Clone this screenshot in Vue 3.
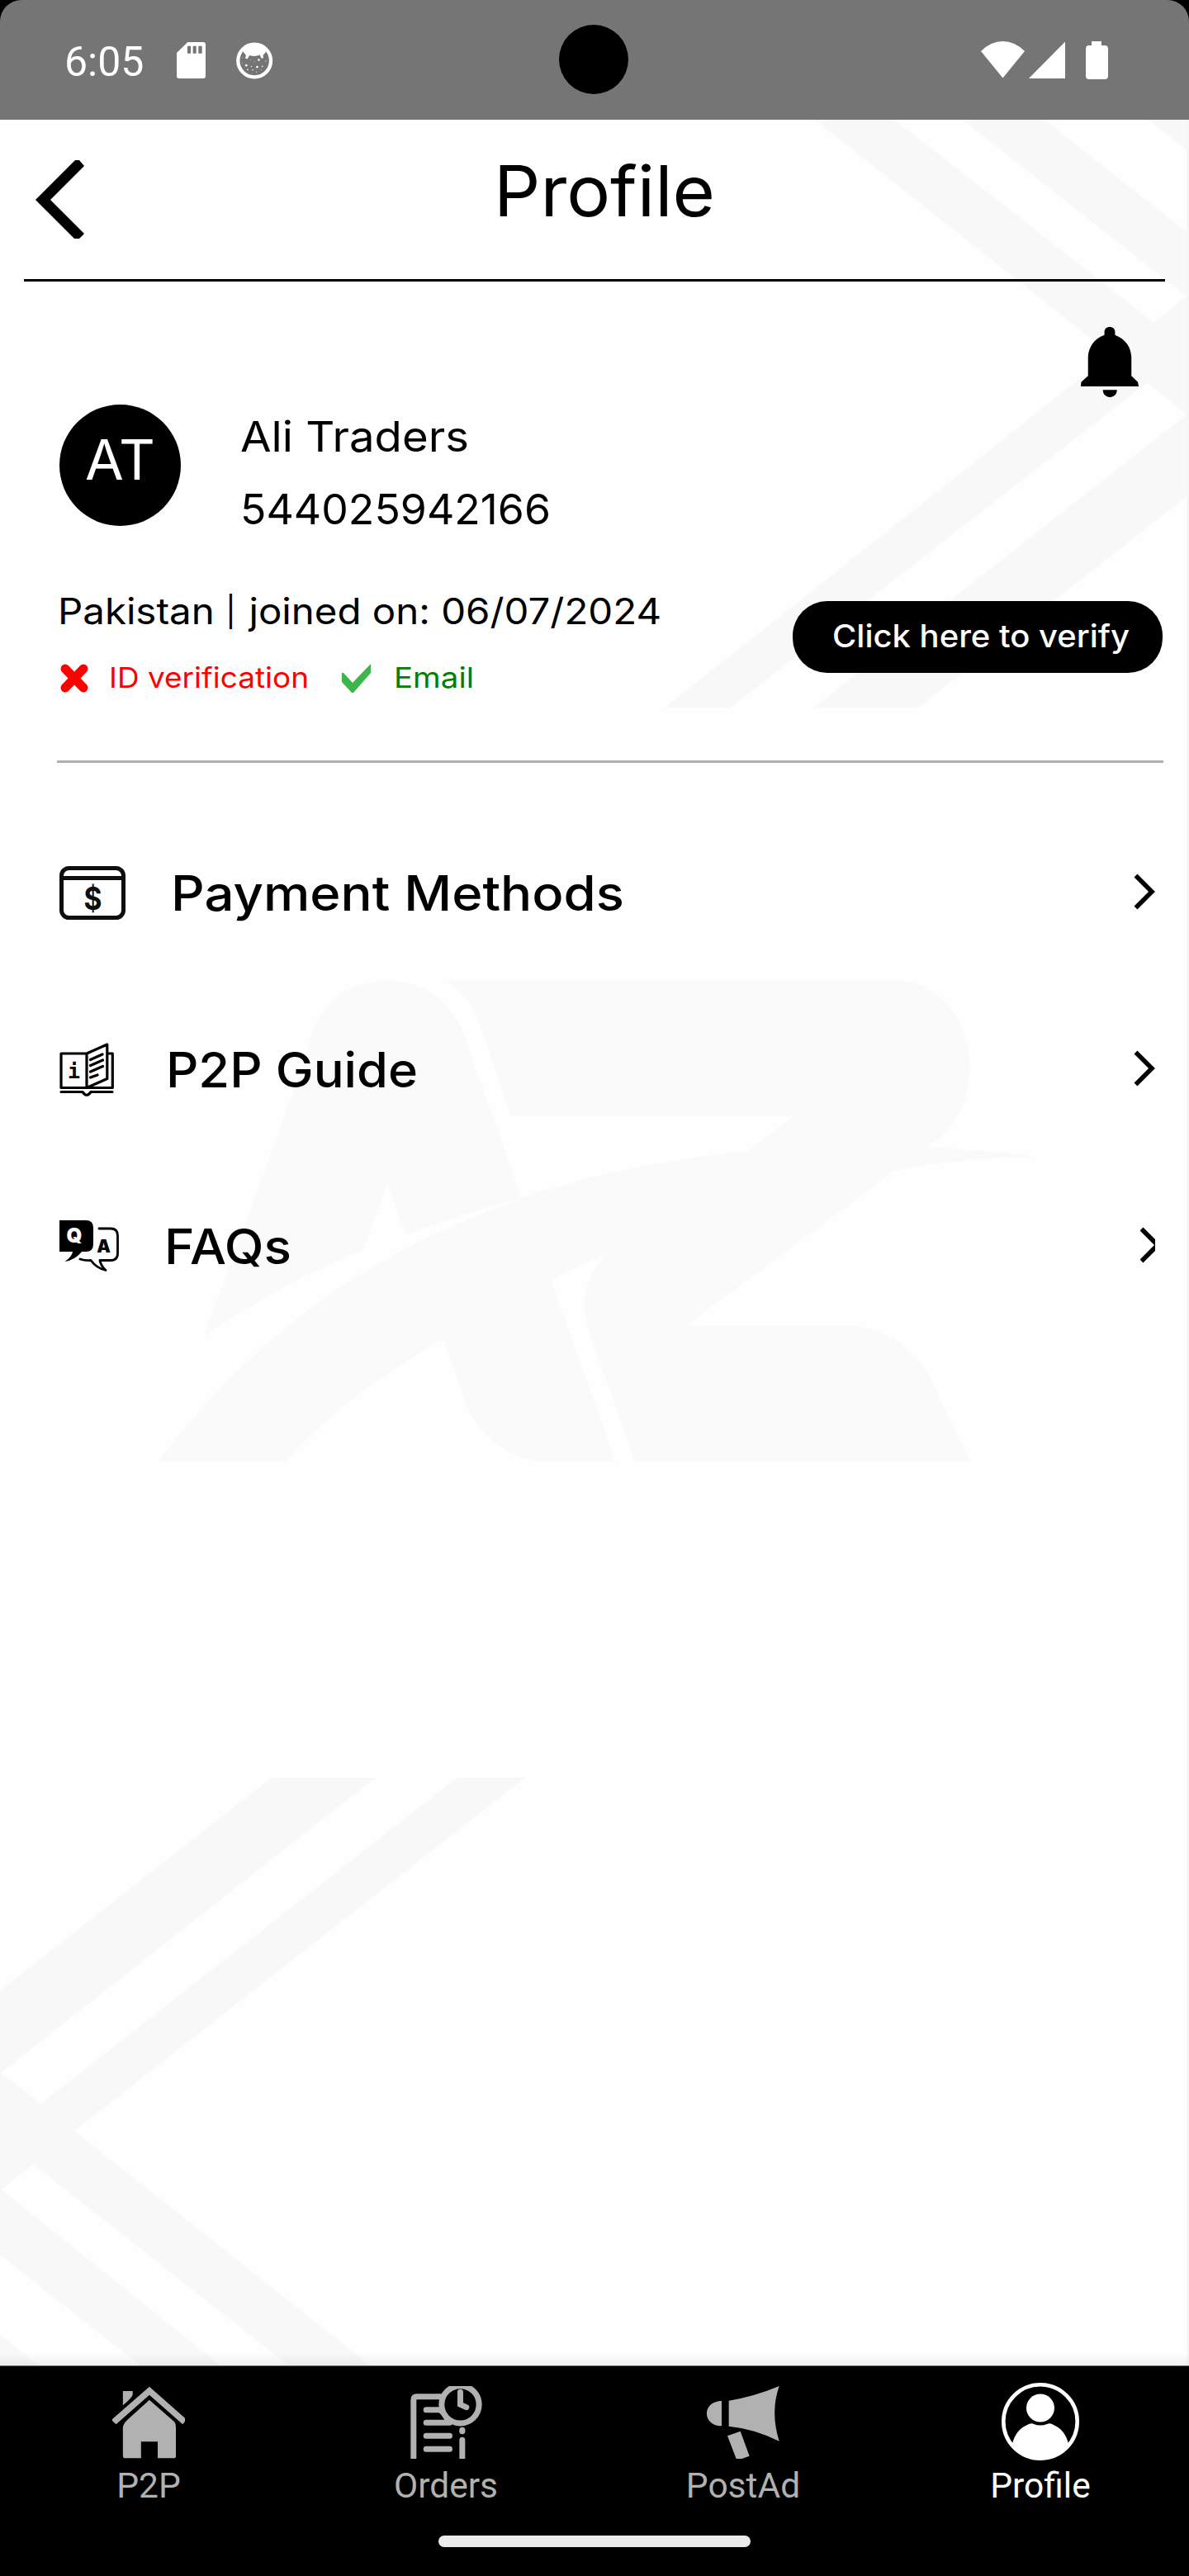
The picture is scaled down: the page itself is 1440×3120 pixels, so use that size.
<script setup>
// Stretches a label horizontally so that it takes up the given pixel width.
const vFit = {
  mounted(el, { value }) {
    const natural = el.getBoundingClientRect().width
    el.style.width = value + 'px'
    el.style.transform = `scaleX(${value / natural})`
  },
}
</script>

<template>
  <div class="phone">
    <header class="status">
      <span class="clock">6:05</span>
      <svg class="sd" viewBox="42 33 105 132" width="35" height="44">
        <path fill="#fff" fill-rule="evenodd" d="M82 33H138Q147 33 147 42V156Q147 165 138 165H51Q42 165 42 156V72ZM81 47V74H93V47ZM101 47V74H113V47ZM121 47V74H134V47Z" />
      </svg>
      <svg class="cat" viewBox="258 32 136 136" width="45" height="45">
        <circle cx="325" cy="100" r="60" fill="none" stroke="#fff" stroke-width="13" />
        <path fill="#fff" d="M281 62Q325 20 370 62L364 72L357 79V92L349 90L345 79Q325 87 307 80L299 94L291 91L294 80L288 73Z" />
        <g fill="#fff">
          <circle cx="295" cy="117" r="4" /><circle cx="335" cy="123" r="4" /><circle cx="341" cy="97" r="4" />
          <circle cx="281" cy="108" r="1.500" /><circle cx="280" cy="88" r="1.500" /><circle cx="310" cy="98" r="1.500" />
          <circle cx="325" cy="104" r="1.500" /><circle cx="314" cy="121" r="2" /><circle cx="300" cy="133" r="2.500" />
          <circle cx="319" cy="134" r="2.500" /><circle cx="332" cy="141" r="2" /><circle cx="354" cy="121" r="2.500" />
          <circle cx="366" cy="101" r="2" /><circle cx="350" cy="133" r="1.500" />
        </g>
      </svg>
      <i class="camera"></i>
      <svg class="signals" viewBox="0 0 154 46" width="154" height="46" fill="#fff">
        <path d="M0 12Q12 0 26.500 0Q41 0 53 12L26.500 44.500Z" />
        <path d="M102 .5V45H58Z" />
        <path d="M134 0H146V5H150Q154 5 154 9V42Q154 46 150 46H131Q127 46 127 42V9Q127 5 131 5H134Z" />
      </svg>
    </header>

    <main class="screen">
      <svg class="backdrop" viewBox="0 145 1440 2720" width="1440" height="2720">
        <g fill="#f8f8f8">
          <g transform="translate(720 0) scale(.45918 .33333)">
            <path d="M580 434H790L1475 1172L1568 1068V1512L1457 1390L358 2572H185L1315 1338L1362 1287Z" />
            <path d="M970 434H1186L1568 850V1084ZM1460 434H1568V550ZM578 2572H853L1568 1797V1500Z" />
          </g>
          <path transform="translate(0 2120) scale(.45918 .48465)" d="M0 601L716 68H990L3 805L107 884L1206 68H1385L196 951L980 1540H765L88 1034L3 1097L585 1540H373L0 1260ZM0 1460L105 1540H0Z" />
        </g>
        <g fill="#fafafa" transform="translate(150 1150) scale(.82271 .42092)">
          <path d="M118 1112L270 300C280 170 320 91 390 91C450 91 495 170 510 300L585 714Q500 760 415 820L388 673L352 866Q240 950 118 1112Z" />
          <path d="M474 91H1140C1200 91 1245 200 1245 345C1245 450 1220 520 1183 570Q1260 575 1345 597Q1210 600 1134 638L827 1083H1060C1130 1083 1180 1170 1203 1300L1245 1473H752L686 1105C670 1010 680 930 714 872L628 950L724 1473H612C560 1460 520 1390 502 1300L470 1120Q320 1290 239 1473H51C160 1190 300 950 490 792C620 675 760 610 917 582L986 480H570L525 225Q510 135 474 91Z" />
        </g>
        <path fill="#f6f6f6" d="M1437 145H1440V2865H1437Z" />
      </svg>

      <div class="titlebar">
        <svg class="back" viewBox="0 0 59 95" width="59" height="95">
          <path d="M48 0H53L59 7L18 48L59 89L53 95H47L0 48Z" />
        </svg>
        <h1><span v-fit="268" class="fit">Profile</span></h1>
      </div>

      <section class="profile">
        <svg class="bell" viewBox="1284 1188 152 255" preserveAspectRatio="none" width="70" height="85">
          <path d="M1346 1217V1206C1346 1182 1374 1182 1374 1206V1217C1403 1232 1417 1265 1417 1300V1366L1434 1388L1436 1404H1284L1285 1388L1303 1366V1300C1303 1265 1318 1230 1346 1217ZM1342 1417H1379C1379 1452 1342 1452 1342 1417Z" />
        </svg>
        <div class="who">
          <div class="avatar"><span v-fit="85" class="fit">AT</span></div>
          <div class="names">
            <div><span v-fit="277" class="fit">Ali Traders</span></div>
            <div><span v-fit="376" class="fit">544025942166</span></div>
          </div>
        </div>
        <div class="info">
          <div>
            <div class="joined"><span v-fit="731" class="fit">Pakistan <span class="bar">|</span> joined on: 06/07/2024</span></div>
            <div class="checks">
              <svg viewBox="0 0 34 35" width="34" height="35">
                <path d="M6 6L28 29M28 6L6 29" stroke="#f00" stroke-width="11" stroke-linecap="round" />
              </svg>
              <span class="bad"><span v-fit="242" class="fit">ID verification</span></span>
              <svg viewBox="0 0 35 35" width="35" height="35">
                <path fill="#3cb54a" d="M0 11H2L13 23L35 0V11L14 35H12L0 22Z" />
              </svg>
              <span class="good"><span v-fit="97" class="fit">Email</span></span>
            </div>
          </div>
          <button class="verify"><span v-fit="360" class="fit">Click here to verify</span></button>
        </div>
      </section>

      <nav class="menu">
        <a class="row">
          <svg viewBox="0 0 80 65" width="80" height="65" fill="none" stroke="#0c0f0e" stroke-width="5">
            <rect x="2.500" y="2.500" width="75" height="60" rx="9" />
            <path d="M3 14.500H77" />
            <text x="40.500" y="52.500" text-anchor="middle" font-size="38" font-weight="700" fill="#0c0f0e" stroke="none" textLength="22" lengthAdjust="spacingAndGlyphs">$</text>
          </svg>
          <span class="label pay"><span v-fit="549" class="fit">Payment Methods</span></span>
          <svg class="go" viewBox="0 0 26 44" width="26" height="44"><path d="M2.500 2.500L22 22L2.500 41.500" /></svg>
        </a>
        <a class="row">
          <svg viewBox="0 0 66 65" width="66" height="65" fill="none" stroke="#000" stroke-width="3.200" stroke-linejoin="round" stroke-linecap="round">
            <path d="M33 13H2V54.500H64.300V13H58M33 13V54.500L57.800 43.500V2L33 13M37.500 20.500L52 14M37.500 27.500L52.500 21M37.500 35L52.500 28.500M37.500 42L46 39M2 59.500H28Q33 67 38 59.500H64" />
            <text class="mono" x="17.500" y="43" text-anchor="middle" font-size="25" font-weight="700" fill="#000" stroke="none">i</text>
          </svg>
          <span class="label guide"><span v-fit="305" class="fit">P2P Guide</span></span>
          <svg class="go" viewBox="0 0 26 44" width="26" height="44"><path d="M2.500 2.500L22 22L2.500 41.500" /></svg>
        </a>
        <a class="row">
          <svg viewBox="0 0 72 62" width="72" height="62">
            <path d="M0 0H32Q41 0 41 9V29Q41 38 32 38H27Q19 48 6.500 50Q15 44 16 38H0Z" />
            <path fill="none" stroke="#000" stroke-width="2.800" stroke-linecap="round" stroke-linejoin="round" d="M48 10H62Q70.500 10 70.500 18.500V40Q70.500 48.500 62 48.500H49Q50 55 56 60.500Q45 58 38 48.500Q31 49 25 47" />
            <text x="18" y="26.500" text-anchor="middle" font-size="24" font-weight="900" fill="#fff">Q</text>
            <text x="53.500" y="39" text-anchor="middle" font-size="21" font-weight="900">A</text>
          </svg>
          <span class="label faq"><span v-fit="154" class="fit">FAQs</span></span>
          <svg class="go" viewBox="0 0 19 44" width="19" height="44"><path d="M2.500 2.500L22 22L2.500 41.500" /></svg>
        </a>
      </nav>
    </main>

    <footer class="tabs">
      <div class="tabrow">
        <a class="tab">
          <svg viewBox="296 120 192 264" preserveAspectRatio="none" width="88" height="88" fill="#b1b1b1">
            <path d="M394 122L488 236V248L482 259L394 152L306 259L296 246V240ZM324 138H350V150Q350 160 324 190ZM394 170L460 250Q464 256 464 270V374Q464 382 458 382H416V322H372V382H328Q324 382 324 370V270Q326 255 335 244Z" />
          </svg>
          <span>P2P</span>
        </a>
        <a class="tab">
          <svg viewBox="50 30 260 264" width="87" height="88" fill="none" stroke="#b1b1b1" stroke-width="21" stroke-linecap="round">
            <path d="M61 310V80Q61 68 73 68H158M107 116H158M107 163H192M107 211H192M107 259H192M238 226V310M231 52V97L253 107" />
            <circle cx="231" cy="97" r="68" />
            <path d="M148 116Q174 130 182 160" stroke-width="12" stroke-linecap="butt" />
            <ellipse cx="238" cy="192" rx="11" ry="13" fill="#b1b1b1" stroke="none" />
          </svg>
          <span>Orders</span>
        </a>
        <a class="tab">
          <svg viewBox="1128 30 264 264" width="88" height="88" fill="#b1b1b1">
            <path d="M1182 84V175H1175C1112 168 1112 91 1175 84ZM1208 83Q1300 68 1391 30Q1358 125 1391 230Q1300 185 1208 176ZM1203 211L1250 194L1283 284L1255 294H1235Z" />
          </svg>
          <span>PostAd</span>
        </a>
        <a class="tab on">
          <svg class="user" viewBox="0 0 94 94" width="94" height="94" fill="#fff">
            <circle cx="47" cy="47" r="44.700" fill="none" stroke="#fff" stroke-width="4.600" />
            <circle cx="47" cy="30.500" r="17" />
            <path d="M13 74Q17 57 31 51Q36 48 39 50Q47 53 55 50Q59 48 63 51Q77 57 81 74Q67 92 47 92Q27 92 13 74Z" />
          </svg>
          <span>Profile</span>
        </a>
      </div>
      <i class="pill"></i>
    </footer>
  </div>
</template>

<style>
body {
  background: #000;
}
</style>

<style scoped>
* {
  box-sizing: border-box;
}
svg {
  display: block;
  flex: none;
}
.phone {
  display: flex;
  flex-direction: column;
  width: 1440px;
  height: 3120px;
  overflow: hidden;
  font-family: Inter, sans-serif;
  color: #000;
  white-space: nowrap;
}
.fit {
  display: inline-block;
  transform-origin: 0 50%;
  text-align: left;
}
.status {
  position: relative;
  display: flex;
  align-items: flex-start;
  flex: none;
  height: 145px;
  padding: 50px 98px 0 78px;
  background: #757575;
  border-radius: 26px 26px 0 0;
}
.clock {
  width: 136px;
  font: 400 50px/50px Roboto, sans-serif;
  color: #fff;
}
.sd {
  margin-top: 1px;
}
.cat {
  margin: 1px 0 0 37px;
}
.camera {
  position: absolute;
  left: 677px;
  top: 30px;
  width: 84px;
  height: 84px;
  border-radius: 50%;
  background: #000;
}
.signals {
  margin-left: auto;
}
.screen {
  position: relative;
  flex: 1;
  background: #fefefe;
}
.backdrop {
  position: absolute;
  left: 0;
  top: 0;
}
.screen::after {
  content: '';
  position: absolute;
  left: 0;
  right: 0;
  bottom: 0;
  height: 16px;
  background: linear-gradient(rgba(0, 0, 0, 0), rgba(0, 0, 0, 0.05));
}
.titlebar {
  position: relative;
  display: flex;
  align-items: flex-start;
  height: 196px;
  margin: 0 29px;
  border-bottom: 3px solid #000;
}
.back {
  margin: 49px 0 0 14px;
}
h1 {
  margin: 0 0 0 496px;
  font-size: 85px;
  font-weight: 400;
  line-height: 174px;
}
.profile {
  position: relative;
  margin: 0 31px 0 69px;
  padding-top: 55px;
  height: 583px;
  border-bottom: 3px solid #b0b0b0;
}
.bell {
  margin: 0 30px 0 auto;
}
.who {
  display: flex;
  height: 170px;
  margin: 9px 0 0 3px;
}
.avatar {
  flex: none;
  width: 147px;
  height: 147px;
  border-radius: 50%;
  background: #000;
  color: #fff;
  font-size: 68px;
  line-height: 133px;
  text-align: center;
}
.names {
  margin: -5px 0 0 72px;
  font-size: 51px;
  line-height: 87.5px;
}
.info {
  display: flex;
  justify-content: space-between;
  align-items: flex-start;
}
.joined {
  height: 80px;
  margin: 40px 0 24px 1px;
  font-size: 44px;
  line-height: 80px;
}
.bar {
  position: relative;
  top: -2px;
  margin-right: 2px;
  font-size: 36px;
  line-height: 1;
}
.checks {
  display: flex;
  height: 35px;
  margin-left: 4px;
  font-size: 34px;
  line-height: 33px;
}
.bad {
  width: 307px;
  padding-left: 25px;
  color: #f00;
}
.good {
  padding-left: 28px;
  color: #008000;
}
.verify {
  width: 448px;
  height: 87px;
  margin: 68px 1px 0 0;
  padding: 0 0 2px 7px;
  border: 0;
  border-radius: 42px;
  background: #000;
  color: #fff;
  font: 500 38px/85px Inter, sans-serif;
}
.menu {
  position: relative;
  padding: 50px 41px 0 72px;
}
.row {
  display: flex;
  align-items: center;
  height: 214px;
}
.label {
  font-size: 59px;
  font-weight: 500;
}
.pay {
  margin-left: 55px;
}
.guide {
  margin-left: 63px;
}
.faq {
  margin-left: 55px;
}
.go {
  margin: -3px 0 0 auto;
  fill: none;
  stroke: #000;
  stroke-width: 5.5;
}
.mono {
  font-family: 'DejaVu Sans Mono', monospace;
}
.tabs {
  flex: none;
  height: 255px;
  border-top: 1px solid #5f6a66;
  background: #000;
}
.tabrow {
  display: flex;
  height: 205px;
}
.tab {
  display: flex;
  flex-direction: column;
  align-items: center;
  width: 361px;
  padding-top: 24px;
  color: #b1b1b1;
  font: 400 42.5px/50px Roboto, sans-serif;
}
.tab span {
  margin-top: 8px;
}
.tab svg {
  height: 88px;
}
.tab svg.user {
  height: 94px;
  margin: -4px 0 -2px;
}
.on {
  color: #fff;
}
.pill {
  display: block;
  width: 378px;
  height: 14px;
  margin-left: 531px;
  border-radius: 7px;
  background: #ebebeb;
}
</style>
